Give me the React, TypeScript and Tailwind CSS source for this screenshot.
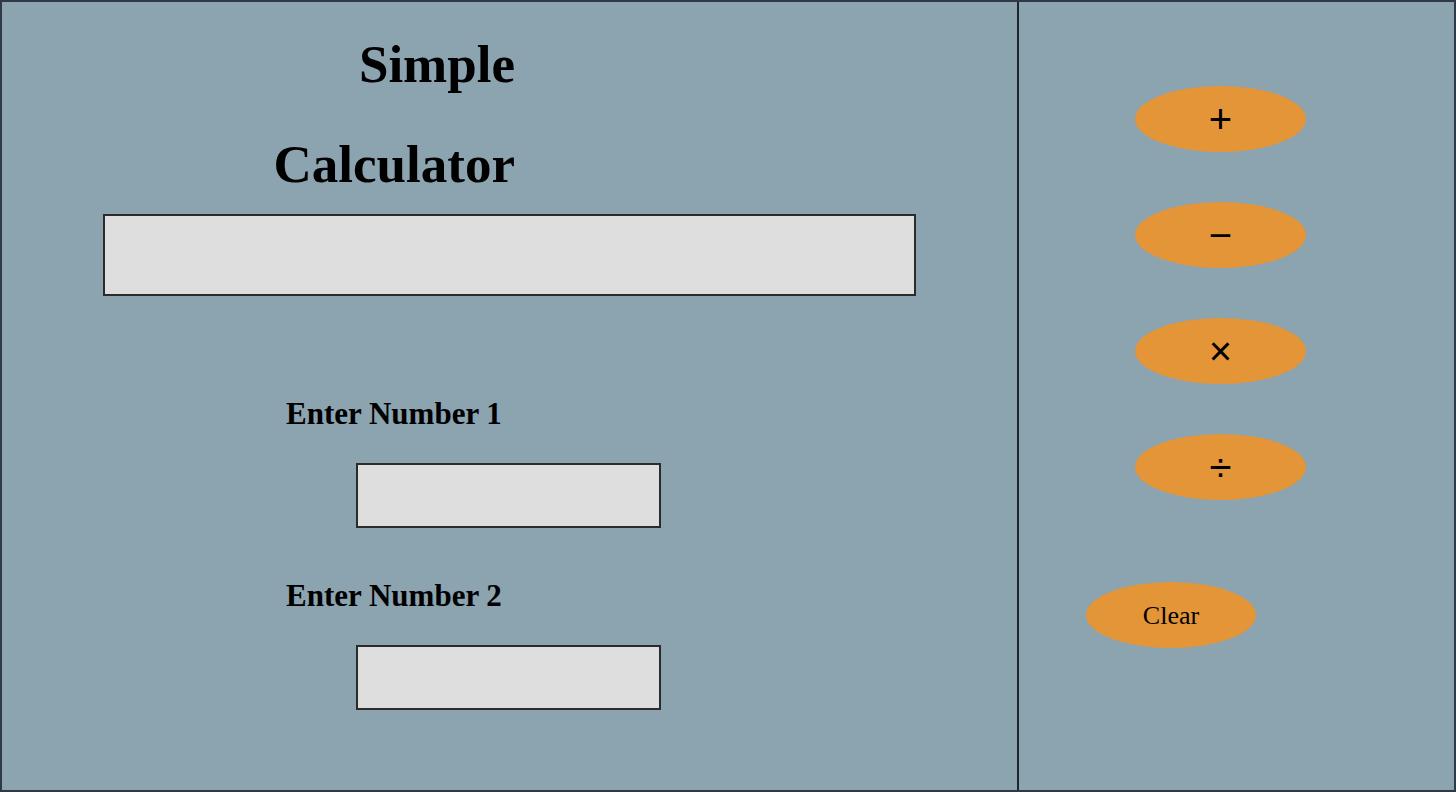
import React from "react";

const serif = { fontFamily: '"Liberation Serif", "Times New Roman", serif' };

function OpButton({ label, className = "" }: { label: string; className?: string }) {
  return (
    <button
      className={`flex h-[66px] w-[171px] items-center justify-center rounded-[50%] bg-[#e49537] text-[40px] leading-none text-black ${className}`}
      style={{ fontFamily: '"Liberation Sans", Arial, sans-serif' }}
    >
      {label}
    </button>
  );
}

function NumberField({ label }: { label: string }) {
  return (
    <div className="flex flex-col">
      <label className="ml-[284px] text-[31px] font-bold leading-[36px] text-black">
        {label}
      </label>
      <input
        type="text"
        className="ml-[354px] mt-[31px] h-[65px] w-[305px] border-2 border-[#2b2b2b] bg-[#dedede] outline-none"
      />
    </div>
  );
}

export default function App() {
  return (
    <div
      className="flex h-[792px] w-[1456px] border-2 border-[#2e3a44] bg-[#8ca3b0]"
      style={serif}
    >
      <div className="flex w-[1017px] flex-col border-r-2 border-[#1e252b]">
        <h1 className="mt-[12px] w-[513px] text-right text-[53px] font-bold leading-[100px] text-black">
          Simple
          <br />
          Calculator
        </h1>
        <input
          type="text"
          readOnly
          className="ml-[101px] h-[82px] w-[813px] border-2 border-[#2b2b2b] bg-[#dedede] outline-none"
        />
        <div className="mt-[100px]">
          <NumberField label="Enter Number 1" />
        </div>
        <div className="mt-[50px]">
          <NumberField label="Enter Number 2" />
        </div>
      </div>

      <div className="flex flex-1 flex-col pt-[84px]">
        <div className="ml-[116px] flex flex-col gap-[50px]">
          <OpButton label="+" />
          <OpButton label="−" />
          <OpButton label="×" />
          <OpButton label="÷" />
        </div>
        <button className="ml-[67px] mt-[82px] flex h-[66px] w-[170px] items-center justify-center rounded-[50%] bg-[#e49537] text-[26px] text-black">
          Clear
        </button>
      </div>
    </div>
  );
}
